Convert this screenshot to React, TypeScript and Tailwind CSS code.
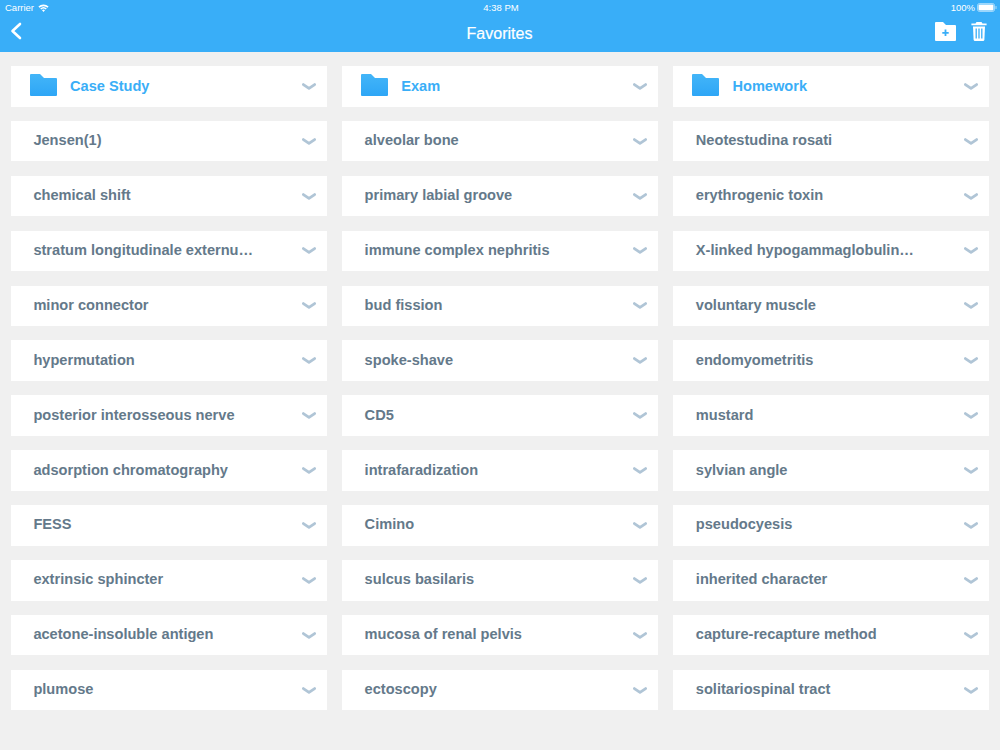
const font = "font-['Liberation_Sans',Arial,sans-serif]"

const columns = [
  {
    folder: "Case Study",
    items: [
      "Jensen(1)",
      "chemical shift",
      "stratum longitudinale externu…",
      "minor connector",
      "hypermutation",
      "posterior interosseous nerve",
      "adsorption chromatography",
      "FESS",
      "extrinsic sphincter",
      "acetone-insoluble antigen",
      "plumose",
    ],
  },
  {
    folder: "Exam",
    items: [
      "alveolar bone",
      "primary labial groove",
      "immune complex nephritis",
      "bud fission",
      "spoke-shave",
      "CD5",
      "intrafaradization",
      "Cimino",
      "sulcus basilaris",
      "mucosa of renal pelvis",
      "ectoscopy",
    ],
  },
  {
    folder: "Homework",
    items: [
      "Neotestudina rosati",
      "erythrogenic toxin",
      "X-linked hypogammaglobulin…",
      "voluntary muscle",
      "endomyometritis",
      "mustard",
      "sylvian angle",
      "pseudocyesis",
      "inherited character",
      "capture-recapture method",
      "solitariospinal tract",
    ],
  },
]

function Chevron() {
  return (
    <svg width="14" height="8" viewBox="0 0 14 8" className="mt-[1px] shrink-0">
      <path d="M1.4 1.6 L7 5.4 L12.6 1.6" fill="none" stroke="#b0c5d6" strokeWidth="2.8" strokeLinecap="round" strokeLinejoin="round" />
    </svg>
  )
}

function FolderRow({ name }: { name: string }) {
  return (
    <div className="flex h-[40.5px] items-center bg-white pl-[19px] pr-[11px]">
      <svg width="27" height="22" viewBox="0 0 27 22" className="mb-[3px] shrink-0">
        <defs>
          <linearGradient id="folderFill" x1="0" y1="0" x2="0" y2="1">
            <stop offset="0" stopColor="#43b5f8" />
            <stop offset="1" stopColor="#2ea6f6" />
          </linearGradient>
        </defs>
        <path d="M0 1 Q0 0 1 0 H10 L14 4 H26 Q27 4 27 5 V21 Q27 22 26 22 H1 Q0 22 0 21 Z" fill="url(#folderFill)" />
      </svg>
      <span className="ml-[13px] mt-[1px] flex-1 text-[14.6px] font-bold text-[#3aaef7]">{name}</span>
      <Chevron />
    </div>
  )
}

function TermRow({ name }: { name: string }) {
  return (
    <div className="flex h-[40.5px] items-center bg-white pl-[22.4px] pr-[11px]">
      <span className="flex-1 text-[14.6px] font-bold text-[#64798a]">{name}</span>
      <Chevron />
    </div>
  )
}

export default function App() {
  return (
    <div className={`${font} h-[750px] w-[1000px] overflow-hidden bg-[#f0f0f0]`}>
      <header className="h-[51.5px] bg-[#39aef8] text-white">
        <div className="flex h-[15px] items-center justify-between pl-[5px] pr-[3px] text-[9.5px] leading-none">
          <div className="flex w-[200px] items-center gap-[4px]">
            <span>Carrier</span>
            <svg width="11" height="8" viewBox="0 0 11 8">
              <path d="M0.4 2.6 A7.4 7.4 0 0 1 10.6 2.6 L9.5 3.8 A5.8 5.8 0 0 0 1.5 3.8 Z M2.2 4.5 A4.8 4.8 0 0 1 8.8 4.5 L7.7 5.6 A3.2 3.2 0 0 0 3.3 5.6 Z M4 6.3 A2.2 2.2 0 0 1 7 6.3 L5.5 8 Z" fill="white" />
            </svg>
          </div>
          <span className="font-medium">4:38 PM</span>
          <div className="flex w-[200px] items-center justify-end gap-[2px]">
            <span>100%</span>
            <svg width="20" height="9" viewBox="0 0 20 9">
              <rect x="0.5" y="0.5" width="17" height="8" rx="2" fill="none" stroke="white" strokeOpacity="0.5" />
              <rect x="1.5" y="1.5" width="15" height="6" rx="1" fill="white" />
              <rect x="18.5" y="3" width="1" height="3" rx="0.5" fill="white" fillOpacity="0.6" />
            </svg>
          </div>
        </div>
        <div className="flex h-[36.5px] items-center justify-between pl-[10px] pr-[13px]">
          <div className="w-[100px]">
            <svg width="12" height="18" viewBox="0 0 12 18" className="mb-[5px]">
              <path d="M10 2 L2.5 9 L10 16" fill="none" stroke="white" strokeWidth="2.6" strokeLinecap="round" strokeLinejoin="round" />
            </svg>
          </div>
          <span className="ml-[2px] mt-[2px] text-[16px] [-webkit-text-stroke:0.2px_white]">Favorites</span>
          <div className="mb-[4px] flex w-[100px] items-center justify-end gap-[15px]">
            <svg width="21" height="19" viewBox="0 0 21 19">
              <path d="M0 1 Q0 0 1 0 H8 L11 3 H20 Q21 3 21 4 V18 Q21 19 20 19 H1 Q0 19 0 18 Z" fill="white" />
              <path d="M10.5 7.5 V14 M7.3 10.8 H13.7" stroke="#39aef8" strokeWidth="1.8" />
            </svg>
            <svg width="16" height="20" viewBox="0 0 16 20">
              <path d="M5.5 1 H10.5 L11.5 2.4 H15.6 V4.2 H0.4 V2.4 H4.5 Z" fill="white" />
              <path d="M2 5.5 H14 L13.4 18.5 Q13.3 20 12 20 H4 Q2.7 20 2.6 18.5 Z" fill="white" />
              <path d="M5.2 7.5 V17.5 M8 7.5 V17.5 M10.8 7.5 V17.5" stroke="#39aef8" strokeWidth="1.3" />
            </svg>
          </div>
        </div>
      </header>
      <main className="grid grid-cols-3 gap-x-[15.67px] px-[11px] pt-[14.5px]">
        {columns.map((col) => (
          <div key={col.folder} className="flex flex-col gap-[14.4px]">
            <FolderRow name={col.folder} />
            {col.items.map((item) => (
              <TermRow key={item} name={item} />
            ))}
          </div>
        ))}
      </main>
    </div>
  )
}
